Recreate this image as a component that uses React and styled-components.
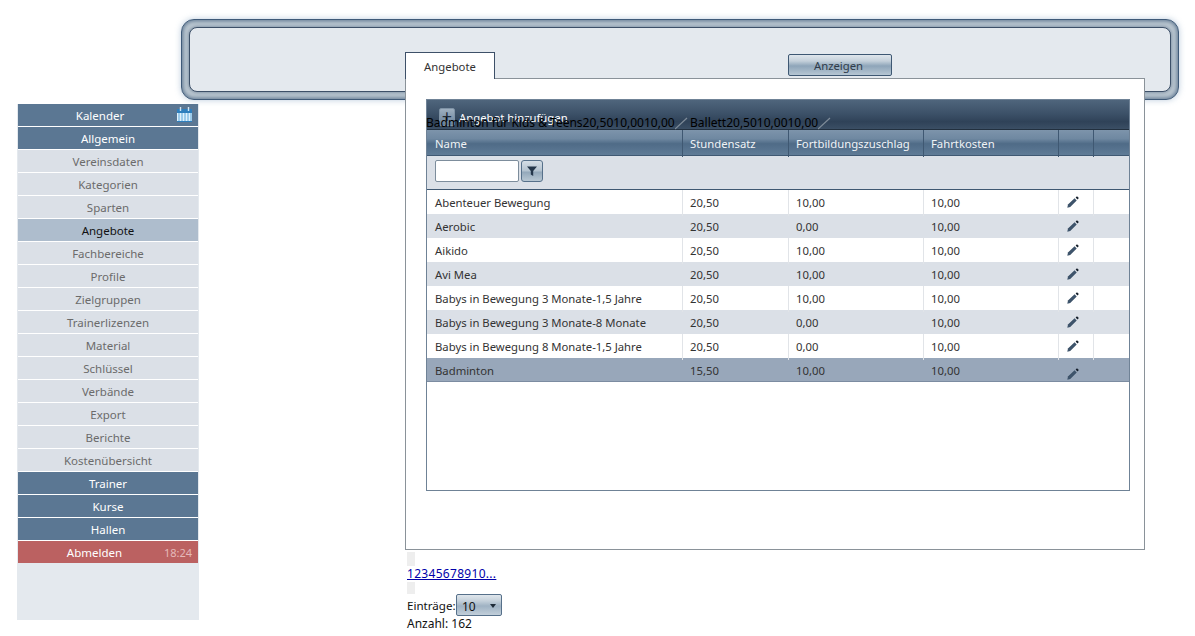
import React from 'react';
import styled, { createGlobalStyle } from 'styled-components';

const GlobalStyle = createGlobalStyle`
  html, body { margin: 0; padding: 0; background: #fff; overflow: hidden; }
  body { font-family: "Noto Sans", "Liberation Sans", Arial, sans-serif; font-size: 11.3px; color: #333; }
`;

const Page = styled.div`
  display: flex;
  align-items: flex-start;
  padding: 19px 0 0 17px;
`;

const Sidebar = styled.nav`
  width: 182px;
  height: 516px;
  margin: 85px -18px 0 0;
  padding: 0 1px;
  box-sizing: border-box;
  background: #e4e9ee;
  display: flex;
  flex-direction: column;
`;

const menuColors = {
  main: { bg: '#5b7793', fg: '#fff' },
  sub: { bg: '#dbe0e7', fg: '#6b6b6b' },
  active: { bg: '#aebdcd', fg: '#111' },
  logout: { bg: '#bb6161', fg: '#fff' },
};

const menuOffset = { Kalender: 16, Abmelden: 27 };

const MenuItem = styled.a`
  position: relative;
  height: 23px;
  box-sizing: border-box;
  font-size: 11.5px;
  line-height: 24px;
  text-align: center;
  padding-right: ${p => p.$offset || 0}px;
  background: ${p => menuColors[p.$kind].bg};
  border-bottom: 1px solid ${p => (p.$kind === 'logout' ? 'transparent' : '#fff')};
  background-clip: padding-box;
  color: ${p => menuColors[p.$kind].fg};
`;

const MenuTime = styled.span`
  position: absolute;
  right: 6px;
  top: 0;
  font-size: 11px;
  color: #e5b9b9;
`;

const CalendarIcon = styled.svg`
  position: absolute;
  right: 6px;
  top: 3px;
`;

const Main = styled.div`
  width: 998px;
  position: relative;
`;

const TopFrame = styled.div`
  height: 81px;
  box-sizing: border-box;
  padding: 7px;
  border: 1px solid #3f5a78;
  border-radius: 13px;
  background: #bcc8d2;
  box-shadow: 0 0 6px rgba(90, 130, 170, 0.4), inset 0 0 4px 1px #5a738d;
`;

const TopInner = styled.div`
  height: 100%;
  box-sizing: border-box;
  border: 1px solid #3d5068;
  border-radius: 8px;
  background: #e4e9ee;
  box-shadow: 0 0 3px 1px rgba(70, 95, 120, 0.45);
  display: flex;
  justify-content: flex-start;
  padding: 26px 0 0 598px;
`;

const ShowButton = styled.button`
  width: 104px;
  height: 22px;
  padding: 0 3px 0 0;
  font: inherit;
  color: #2f3c4a;
  border: 1px solid #3e5873;
  border-radius: 2px;
  background: linear-gradient(#dfe6ec, #c4d0da 30%, #8ea5b9 55%, #b6c6d3);
`;

const ContentArea = styled.div`
  margin: -48px 0 0 224px;
  position: relative;
  width: 740px;
`;

const Tab = styled.div`
  width: 90px;
  height: 27px;
  box-sizing: border-box;
  border: 1px solid #3d5068;
  border-bottom: 0;
  background: #fff;
  text-align: center;
  line-height: 27px;
  position: relative;
  z-index: 1;
  margin-bottom: -1px;
`;

const Panel = styled.div`
  height: 472px;
  box-sizing: border-box;
  border: 1px solid #8a9299;
  background: #fff;
  padding: 20px 14px 0 20px;
`;

const Grid = styled.div`
  width: 704px;
  height: 392px;
  box-sizing: border-box;
  border: 1px solid #6f8296;
  position: relative;
`;

const Toolbar = styled.div`
  height: 30px;
  box-sizing: border-box;
  border-bottom: 1px solid #22303f;
  background: linear-gradient(#4f657c, #3d5269 45%, #2f4258 75%, #3b4f65);
  color: #fff;
  display: flex;
  align-items: flex-start;
  padding: 8px 0 0 12px;
  gap: 4px;
`;

const AddIcon = styled.span`
  width: 16px;
  height: 18px;
  border-radius: 2px;
  background: linear-gradient(#9fb0c0, #67809a);
  border: 1px solid #7f93a6;
  color: #1f2b38;
  font-size: 18px;
  line-height: 15px;
  text-align: center;
  box-sizing: border-box;
`;

const ToolbarLabel = styled.span`
  line-height: 20px;
`;

const StrayRow = styled.div`
  position: absolute;
  left: -1px;
  top: 16px;
  width: 704px;
  height: 14px;
  font-size: 12px;
  color: #000;
  white-space: nowrap;
  line-height: 14px;
  z-index: 2;
`;

const StrayCell = styled.span`
  position: absolute;
  left: ${p => p.$left}px;
  top: 0;
  display: flex;
  align-items: center;
`;

const columns = '256px 106px 135px 135px 35px 35px';

const Row = styled.div`
  display: grid;
  grid-template-columns: ${columns};
  height: ${p => p.$h || 24}px;
  box-sizing: border-box;
`;

const HeaderRow = styled(Row)`
  background: linear-gradient(#7d94ab, #6f88a1 35%, #4f6b87 55%, #5f7b96);
  border-bottom: 1px solid #3f5872;
  color: #f0f3f6;
`;

const HeaderCell = styled.div`
  padding-left: 7px;
  line-height: 27px;
  border-right: 1px solid #3f5872;
  &:first-child { padding-left: 8px; }
  &:last-child { border-right: 0; }
`;

const FilterRow = styled.div`
  height: 34px;
  box-sizing: border-box;
  background: #dbe0e7;
  border-bottom: 1px solid #3f5872;
  padding: 4px 0 0 8px;
  display: flex;
  gap: 2px;
`;

const FilterInput = styled.input`
  width: 84px;
  height: 22px;
  box-sizing: border-box;
  border: 1px solid #7d8d9c;
  border-radius: 2px;
  background: #fff;
  padding: 0;
`;

const FilterButton = styled.button`
  width: 22px;
  height: 22px;
  padding: 0;
  border: 1px solid #56708a;
  border-radius: 3px;
  background: linear-gradient(#d5dee6, #b3c2cf 50%, #93a8ba 55%, #b8c7d3);
  display: flex;
  align-items: center;
  justify-content: center;
`;

const rowBg = { even: '#fff', odd: '#dbe0e7', selected: '#98a7ba' };

const DataRow = styled(Row)`
  background: ${p => rowBg[p.$kind]};
  border-bottom: 1px solid ${p => (p.$kind === 'selected' ? '#7c8ca1' : 'transparent')};
`;

const DataCell = styled.div`
  padding-left: 7px;
  line-height: 26px;
  color: #333;
  border-right: 1px solid ${p => (p.$kind === 'even' ? '#e1e4e8' : 'transparent')};
  &:first-child { padding-left: 8px; }
  &:last-child { border-right: 0; }
`;

const EditCell = styled(DataCell)`
  display: flex;
  align-items: center;
  padding-left: 8px;
  padding-bottom: ${p => (p.$kind === 'selected' ? 0 : 2)}px;
  padding-top: ${p => (p.$kind === 'selected' ? 5 : 0)}px;
`;

const Pager = styled.div`
  padding: 2px 0 0 2px;
  font-size: 12px;
  color: #111;
`;

const PagerGap = styled.div`
  width: 8px;
  height: ${p => p.$h}px;
  background: #eee;
`;

const PagerLink = styled.a`
  display: block;
  height: 16px;
  line-height: 15px;
  letter-spacing: 0.3px;
  color: #00a;
  text-decoration: underline;
`;

const EntriesLine = styled.div`
  display: flex;
  align-items: center;
  height: 22px;
`;

const EntriesLabel = styled.span`
  width: 49px;
  font-size: 11.6px;
  white-space: nowrap;
`;

const EntriesSelect = styled.div`
  width: 46px;
  height: 22px;
  box-sizing: border-box;
  border: 1px solid #56708a;
  border-radius: 2px;
  background: linear-gradient(#dfe6ec, #c4d0da 30%, #9fb2c3 55%, #c2cfda);
  display: flex;
  align-items: center;
  justify-content: space-between;
  padding: 2px 5px 0 5px;
`;

const CountLine = styled.div`
  margin-top: 1px;
  line-height: 14px;
`;

const Caret = styled.span`
  width: 0;
  height: 0;
  border: 3.5px solid transparent;
  border-top: 4px solid #1f2b38;
  border-bottom: 0;
`;

const Pencil = () => (
  <svg width="12" height="12" viewBox="0 0 12 12">
    <defs>
      <linearGradient id="pencil-body" x1="0" y1="0" x2="1" y2="1">
        <stop offset="0" stopColor="#1d2b3b" />
        <stop offset="0.5" stopColor="#3f566e" />
        <stop offset="1" stopColor="#1d2b3b" />
      </linearGradient>
    </defs>
    <path d="M0.3 11.7 L1 8.4 L7.6 2.3 L9.7 4.4 L3.2 11 Z" fill="url(#pencil-body)" />
    <path d="M8.6 1.6 L10 0.3 L11.8 2 L10.5 3.6 Z" fill="#141e2a" />
  </svg>
);

const FaintPencil = () => (
  <svg width="13" height="14" viewBox="0 0 13 14">
    <path d="M0 13 L12 2" stroke="#7f8c99" strokeWidth="1.2" fill="none" />
  </svg>
);

const menu = [
  ['Kalender', 'main'], ['Allgemein', 'main'], ['Vereinsdaten', 'sub'], ['Kategorien', 'sub'],
  ['Sparten', 'sub'], ['Angebote', 'active'], ['Fachbereiche', 'sub'], ['Profile', 'sub'],
  ['Zielgruppen', 'sub'], ['Trainerlizenzen', 'sub'], ['Material', 'sub'], ['Schlüssel', 'sub'],
  ['Verbände', 'sub'], ['Export', 'sub'], ['Berichte', 'sub'], ['Kostenübersicht', 'sub'],
  ['Trainer', 'main'], ['Kurse', 'main'], ['Hallen', 'main'], ['Abmelden', 'logout'],
];

const rows = [
  ['Abenteuer Bewegung', '20,50', '10,00', '10,00'],
  ['Aerobic', '20,50', '0,00', '10,00'],
  ['Aikido', '20,50', '10,00', '10,00'],
  ['Avi Mea', '20,50', '10,00', '10,00'],
  ['Babys in Bewegung 3 Monate-1,5 Jahre', '20,50', '10,00', '10,00'],
  ['Babys in Bewegung 3 Monate-8 Monate', '20,50', '0,00', '10,00'],
  ['Babys in Bewegung 8 Monate-1,5 Jahre', '20,50', '0,00', '10,00'],
  ['Badminton', '15,50', '10,00', '10,00'],
];

export default function App() {
  return (
    <Page>
      <GlobalStyle />
      <Sidebar>
        {menu.map(([label, kind]) => (
          <MenuItem key={label} $kind={kind} $offset={menuOffset[label]}>
            {label}
            {label === 'Kalender' && (
              <CalendarIcon width="15" height="15" viewBox="0 0 15 15">
                <rect x="0" y="2" width="15" height="13" fill="#dff1fc" />
                <rect x="0" y="2" width="15" height="4" fill="#2f7fbd" />
                <path d="M3.5 0v4M11.5 0v4" stroke="#cfe4f3" strokeWidth="1.4" />
                <path d="M2 6v9M5 6v9M8 6v9M11 6v9M14 6v9" stroke="#5aa6da" />
                <path d="M0 14.5h15" stroke="#2f7fbd" />
              </CalendarIcon>
            )}
            {label === 'Abmelden' && <MenuTime>18:24</MenuTime>}
          </MenuItem>
        ))}
      </Sidebar>
      <Main>
        <TopFrame>
          <TopInner>
            <ShowButton>Anzeigen</ShowButton>
          </TopInner>
        </TopFrame>
        <ContentArea>
          <Tab>Angebote</Tab>
          <Panel>
            <Grid>
              <Toolbar>
                <AddIcon>+</AddIcon>
                <ToolbarLabel>Angebot hinzufügen</ToolbarLabel>
              </Toolbar>
              <StrayRow>
                <StrayCell $left={0}>Badminton für Kids &amp; Teens20,5010,0010,00<FaintPencil /></StrayCell>
                <StrayCell $left={264}>Ballett20,5010,0010,00<FaintPencil /></StrayCell>
              </StrayRow>
              <HeaderRow $h={26}>
                <HeaderCell>Name</HeaderCell>
                <HeaderCell>Stundensatz</HeaderCell>
                <HeaderCell>Fortbildungszuschlag</HeaderCell>
                <HeaderCell>Fahrtkosten</HeaderCell>
                <HeaderCell />
                <HeaderCell />
              </HeaderRow>
              <FilterRow>
                <FilterInput />
                <FilterButton>
                  <svg width="12" height="12" viewBox="0 0 12 12">
                    <path d="M1 1.5h10L7.2 6v5L4.8 9.5V6Z" fill="#24364a" />
                  </svg>
                </FilterButton>
              </FilterRow>
              {rows.map((r, i) => {
                const kind = i === 7 ? 'selected' : i % 2 ? 'odd' : 'even';
                return (
                  <DataRow key={r[0]} $kind={kind}>
                    {r.map(v => <DataCell key={v + r[0]} $kind={kind}>{v}</DataCell>)}
                    <EditCell $kind={kind}><Pencil /></EditCell>
                    <DataCell $kind={kind} />
                  </DataRow>
                );
              })}
            </Grid>
          </Panel>
          <Pager>
            <PagerGap $h={14} />
            <PagerLink href="#">12345678910...</PagerLink>
            <PagerGap $h={12} />
            <EntriesLine>
              <EntriesLabel>Einträge:</EntriesLabel>
              <EntriesSelect>10<Caret /></EntriesSelect>
            </EntriesLine>
            <CountLine>Anzahl: 162</CountLine>
          </Pager>
        </ContentArea>
      </Main>
    </Page>
  );
}
